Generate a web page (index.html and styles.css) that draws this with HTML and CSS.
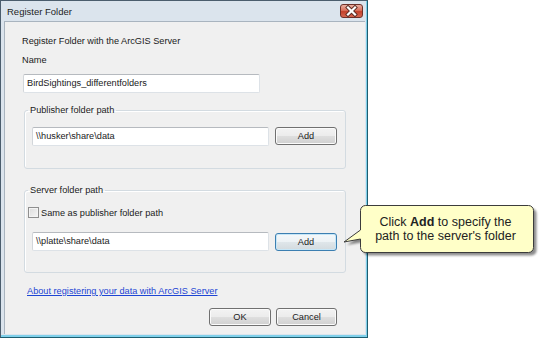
FILE: index.html
```html
<!DOCTYPE html>
<html>
<head>
<meta charset="utf-8">
<link rel="stylesheet" href="styles.css">
</head>
<body>
<div class="stage">
  <div class="window">
    <div class="titlebar">
      <span class="title">Register Folder</span>
      <span class="close">
        <svg width="23" height="14" viewBox="0 0 23 14">
          <path d="M8 3.5 L15 10.5 M15 3.5 L8 10.5" stroke="#5a2a22" stroke-width="4" stroke-linecap="square"/>
          <path d="M8 3.5 L15 10.5 M15 3.5 L8 10.5" stroke="#ffffff" stroke-width="2.2" stroke-linecap="square"/>
        </svg>
      </span>
    </div>
    <div class="client">
      <div class="heading">Register Folder with the ArcGIS Server</div>
      <div class="name-label">Name</div>
      <div class="textbox name-box">BirdSightings_differentfolders</div>
      <fieldset class="group group-pub">
        <legend>Publisher folder path</legend>
        <div class="row">
          <div class="textbox path">\\husker\share\data</div>
          <div class="btn">Add</div>
        </div>
      </fieldset>
      <fieldset class="group group-srv">
        <legend>Server folder path</legend>
        <div class="check-row">
          <span class="checkbox"></span>
          <span>Same as publisher folder path</span>
        </div>
        <div class="row row-srv">
          <div class="textbox path">\\platte\share\data</div>
          <div class="btn btn-focus">Add</div>
        </div>
      </fieldset>
      <a class="link" href="#">About registering your data with ArcGIS Server</a>
      <div class="actions">
        <div class="btn">OK</div>
        <div class="btn">Cancel</div>
      </div>
    </div>
  </div>
  <div class="callout">
    <svg class="bubble" width="196" height="56" viewBox="0 0 196 56">
      <defs>
        <filter id="sh" x="-10%" y="-20%" width="130%" height="150%">
          <feGaussianBlur stdDeviation="1.3"/>
        </filter>
      </defs>
      <path transform="translate(3,3)" filter="url(#sh)" fill="rgba(0,0,0,0.45)"
        d="M17.5 7.5 A5 5 0 0 1 22.5 2.5 H185.5 A5 5 0 0 1 190.5 7.5 V44.5 A5 5 0 0 1 185.5 49.5 H22.5 A5 5 0 0 1 17.5 44.5 V36 L1 39 L17.5 27 Z"/>
      <path fill="#ffffc8" stroke="#3c3c3c" stroke-width="1"
        d="M17.5 7.5 A5 5 0 0 1 22.5 2.5 H185.5 A5 5 0 0 1 190.5 7.5 V44.5 A5 5 0 0 1 185.5 49.5 H22.5 A5 5 0 0 1 17.5 44.5 V36 L1 39 L17.5 27 Z"/>
    </svg>
    <div class="callout-text">Click <b>Add</b> to specify the<br>path to the server's folder</div>
  </div>
</div>
</body>
</html>
```
FILE: styles.css
```css
* { box-sizing: border-box; }
html, body {
  margin: 0;
  padding: 0;
  background: #ffffff;
}
.stage {
  position: relative;
  width: 542px;
  height: 338px;
  font-family: "Liberation Sans", Arial, sans-serif;
  color: #1a1a1a;
}
.window {
  width: 368px;
  height: 338px;
  border: 1px solid #4b5d6d;
  border-right-color: #1d5d70;
  border-bottom-color: #1d5d70;
  background: #dbe4ed;
  display: flex;
  flex-direction: column;
  box-shadow: inset -1px -2px 0 #7fd0ea;
}
.titlebar {
  height: 20px;
  display: flex;
  align-items: flex-start;
  justify-content: space-between;
  padding-left: 6px;
}
.title {
  font-size: 9.5px;
  line-height: 12px;
  margin-top: 5px;
  color: #1e1e1e;
}
.close {
  width: 23px;
  height: 14px;
  margin-top: 3px;
  margin-right: 4px;
  border: 1px solid #6e3028;
  border-radius: 3px;
  background: linear-gradient(#eab0a3 0%, #d9705c 45%, #c4402a 55%, #d56650 100%);
  display: flex;
  align-items: center;
  justify-content: center;
  overflow: hidden;
}
.close svg { display: block; margin: -1px; }
.client {
  margin: 0 2px 3px 3px;
  height: 313px;
  background: #f0f0f0;
  border-left: 1px solid #a9b4bf;
  border-top: 1px solid #a9b4bf;
  display: flex;
  flex-direction: column;
  align-items: flex-start;
  padding: 13px 0 0 17px;
  font-size: 9.2px;
}
.heading {
  line-height: 12px;
  height: 12px;
}
.name-label {
  margin-top: 7px;
  line-height: 12px;
  height: 12px;
}
.textbox {
  height: 19px;
  background: #ffffff;
  border: 1px solid #dde2e7;
  border-top-color: #b6babf;
  border-left-color: #d2d6da;
  border-radius: 2px;
  padding-left: 3px;
  line-height: 17px;
  font-size: 9.2px;
  white-space: nowrap;
}
.name-box {
  margin-top: 8px;
  margin-left: 1px;
  width: 237px;
}
.group {
  margin: 11px 0 0 2px;
  width: 322px;
  border: 1px solid #d3dbe1;
  border-radius: 3px;
  padding: 11px 7px 22px 7px;
  min-width: 0;
  box-shadow: inset 1px 1px 0 #ffffff;
}
.group legend {
  padding: 0 2px;
  margin-left: -4px;
  line-height: 12px;
  font-size: 9.2px;
}
.group-srv {
  margin-top: 15px;
  padding-top: 10px;
  padding-bottom: 21px;
}
.row {
  display: flex;
  gap: 6px;
  align-items: flex-start;
}
.row-srv { margin-top: 13px; }
.path { width: 237px; }
.btn {
  width: 62px;
  height: 18px;
  border: 1px solid #707070;
  border-radius: 3px;
  background: linear-gradient(#f3f3f3 0%, #ececec 48%, #dedede 52%, #d0d0d0 100%);
  box-shadow: inset 0 0 0 1px #fbfbfb;
  text-align: center;
  line-height: 16px;
  font-size: 9.2px;
  color: #1a1a1a;
}
.btn-focus {
  margin-top: 1px;
  border-color: #3c7fb1;
  box-shadow: inset 0 0 0 1px #c6e6f7;
  background: linear-gradient(#f4f8fa 0%, #edf2f5 48%, #dfe6ea 52%, #d3dade 100%);
}
.check-row {
  display: flex;
  align-items: center;
  gap: 2px;
  height: 13px;
  margin-left: -4px;
  line-height: 12px;
}
.checkbox {
  width: 11px;
  height: 11px;
  border: 1px solid #8f8f8f;
  background: linear-gradient(135deg, #dcdcdc, #f6f6f6);
  box-shadow: inset 0 0 0 1px #f4f4f4;
}
.link {
  margin-top: 12px;
  margin-left: 5px;
  line-height: 12px;
  height: 12px;
  color: #1d45d4;
  text-decoration: underline;
}
.actions {
  margin-top: 11px;
  margin-left: 187px;
  display: flex;
  gap: 5px;
}
.actions .btn:last-child { width: 61px; }
.callout {
  position: absolute;
  left: 343px;
  top: 203px;
  width: 196px;
  height: 56px;
  display: flex;
  align-items: center;
  justify-content: center;
  padding: 2px 6px 6px 17px;
}
.bubble {
  position: absolute;
  left: 0;
  top: 0;
}
.callout-text {
  position: relative;
  font-size: 12.5px;
  line-height: 14px;
  text-align: center;
  color: #222222;
  margin-left: -2px;
}
.callout-text b { font-weight: bold; }
```
